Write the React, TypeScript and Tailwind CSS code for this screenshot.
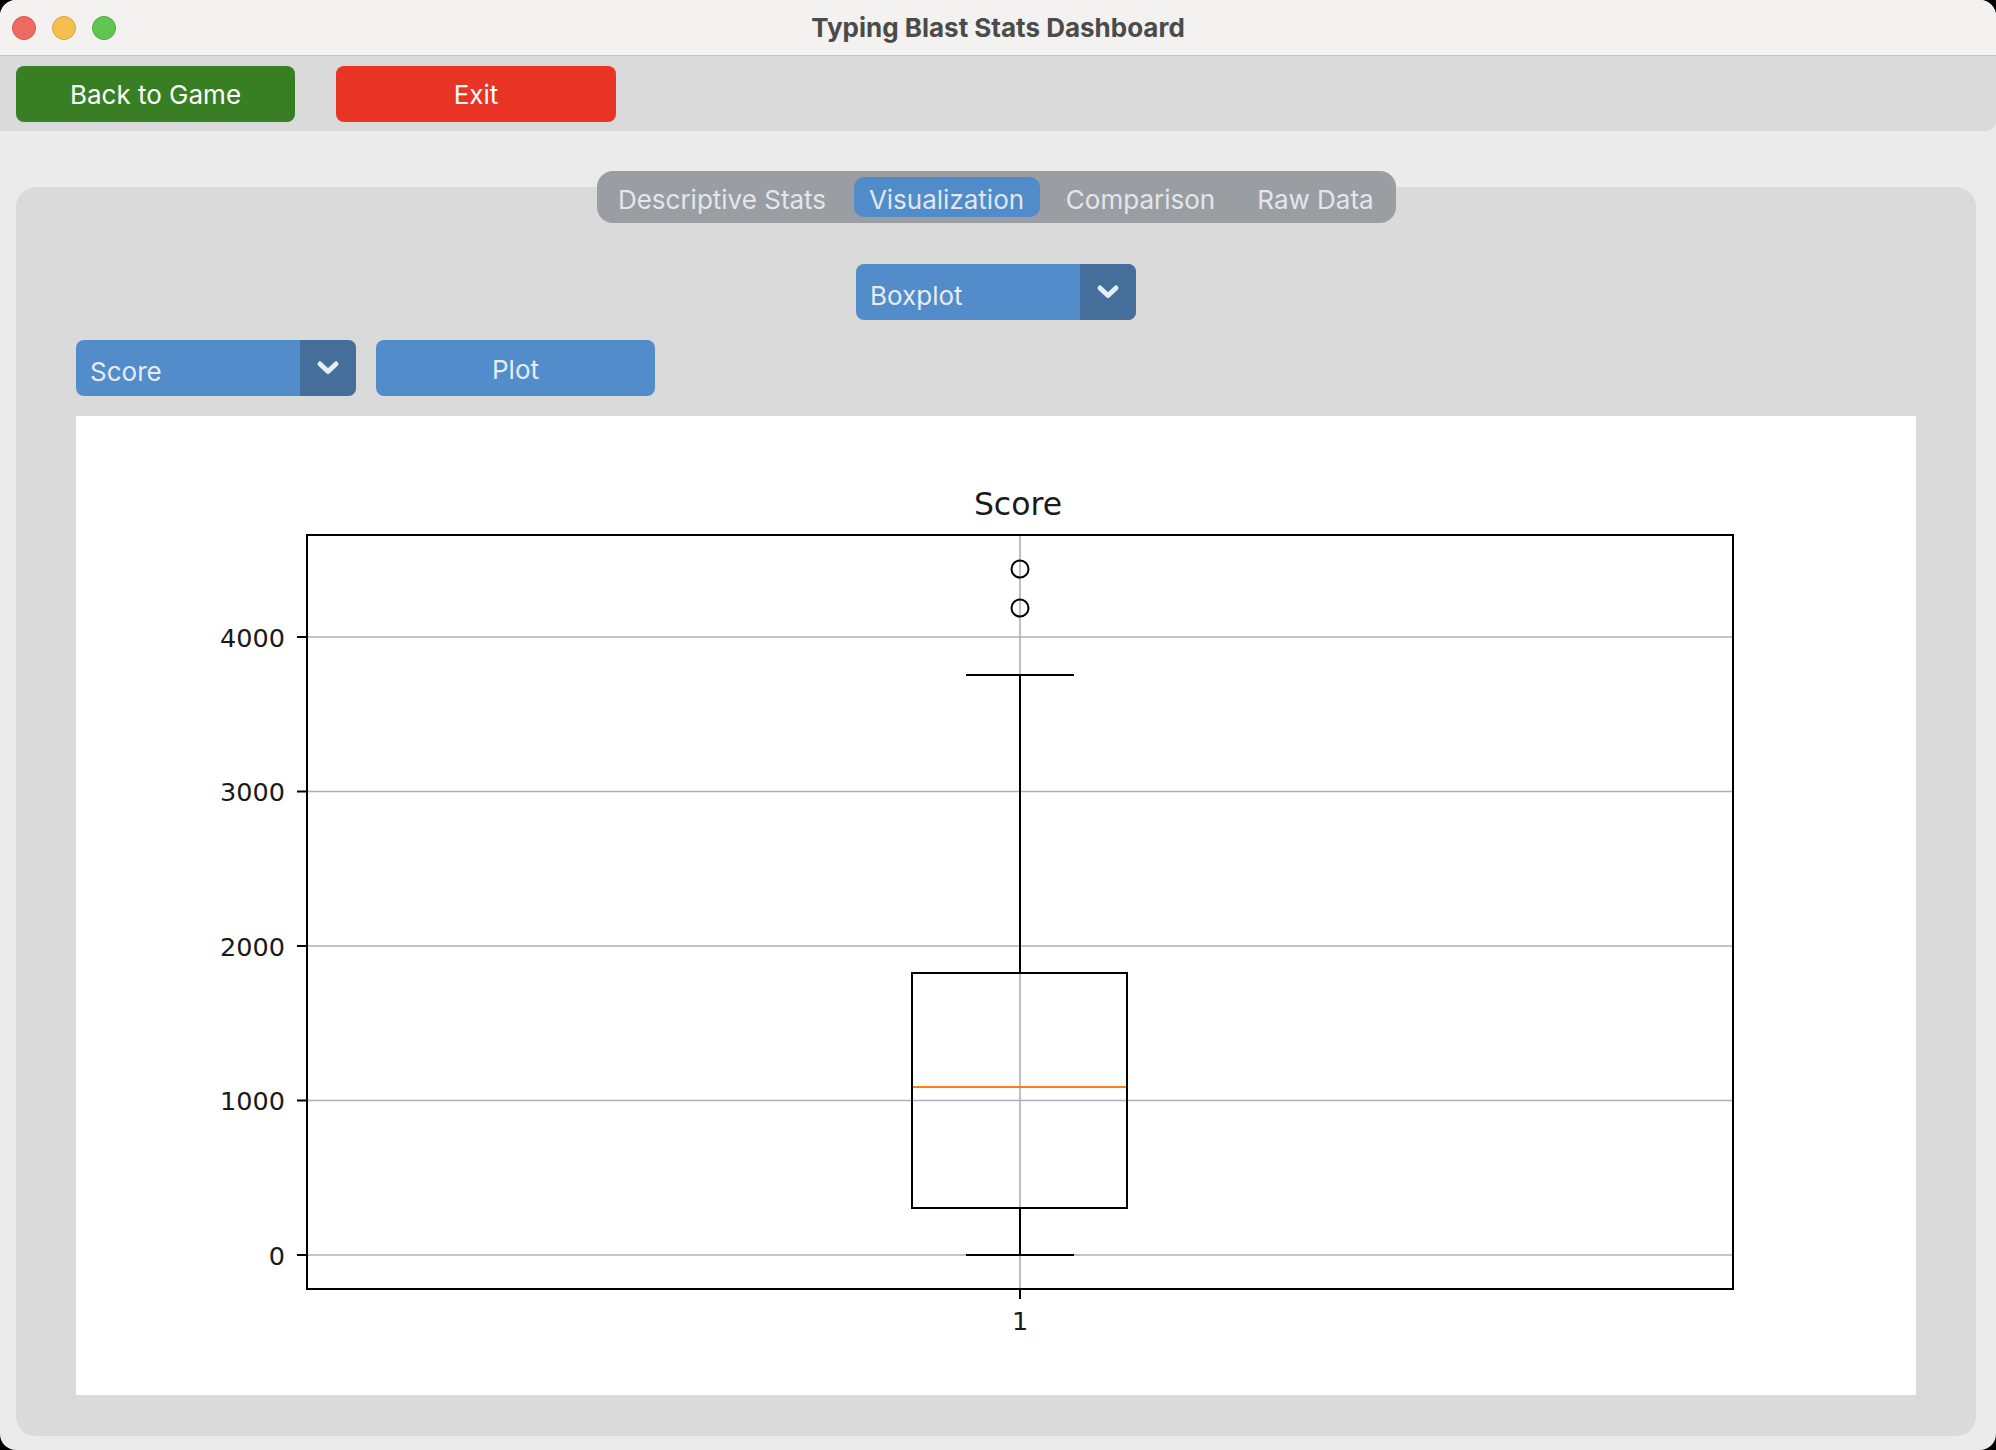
const yTicks = [
  { label: '4000', y: 221 },
  { label: '3000', y: 375.5 },
  { label: '2000', y: 530 },
  { label: '1000', y: 684.5 },
  { label: '0', y: 839 },
];

const tabs = [
  { label: 'Descriptive Stats', w: 'w-[239px]', active: false },
  { label: 'Visualization', w: 'w-[186px]', active: true },
  { label: 'Comparison', w: 'w-[178px]', active: false },
  { label: 'Raw Data', w: 'w-[148px]', active: false },
];

function Chevron() {
  return (
    <svg width="24" height="16" viewBox="0 0 24 16">
      <polyline points="4,4 12,11.5 20,4" fill="none" stroke="#e8ecf4" strokeWidth="5" strokeLinecap="round" strokeLinejoin="round" />
    </svg>
  );
}

function Dropdown({ label, className }: { label: string; className?: string }) {
  return (
    <div className={`flex h-[56px] w-[280px] overflow-hidden rounded-[8px] bg-[#528ccb] ${className ?? ''}`}>
      <div className="flex flex-1 items-center pl-[14px] pt-[6px] text-[26px] text-[#e7ebf3]">{label}</div>
      <div className="flex w-[56px] items-center justify-center bg-[#456f9a]">
        <Chevron />
      </div>
    </div>
  );
}

function BoxPlot() {
  return (
    <svg viewBox="0 0 1840 979" className="h-full w-full" style={{ fontFamily: '"DejaVu Sans", sans-serif' }}>
      {/* grid */}
      {yTicks.map(t => (
        <line key={t.label} x1="231" x2="1657" y1={t.y} y2={t.y} stroke="#b0b0b0" strokeWidth="1.6" />
      ))}
      <line x1="944" x2="944" y1="119" y2="873" stroke="#b0b0b0" strokeWidth="1.6" />

      {/* whiskers */}
      <line x1="944" x2="944" y1="259" y2="557" stroke="#000" strokeWidth="2" />
      <line x1="944" x2="944" y1="792" y2="839" stroke="#000" strokeWidth="2" />
      <line x1="890" x2="998" y1="259" y2="259" stroke="#000" strokeWidth="2" />
      <line x1="890" x2="998" y1="839" y2="839" stroke="#000" strokeWidth="2" />

      {/* box */}
      <rect x="836" y="557" width="215" height="235" fill="none" stroke="#000" strokeWidth="2" />
      <line x1="837" x2="1050" y1="671" y2="671" stroke="#ff7f0e" strokeWidth="2" />

      {/* fliers */}
      <circle cx="944" cy="153" r="8.5" fill="none" stroke="#000" strokeWidth="2" />
      <circle cx="944" cy="192" r="8.5" fill="none" stroke="#000" strokeWidth="2" />

      {/* axes frame */}
      <rect x="231" y="119" width="1426" height="754" fill="none" stroke="#000" strokeWidth="2" />

      {/* y ticks */}
      {yTicks.map(t => (
        <g key={t.label}>
          <line x1="221" x2="231" y1={t.y} y2={t.y} stroke="#000" strokeWidth="2" />
          <text x="209" y={t.y + 9.5} textAnchor="end" fontSize="25.5" fill="#1a1a1a">
            {t.label}
          </text>
        </g>
      ))}

      {/* x tick */}
      <line x1="944" x2="944" y1="873" y2="883" stroke="#000" strokeWidth="2" />
      <text x="944" y="914" textAnchor="middle" fontSize="25.5" fill="#1a1a1a">1</text>

      <text x="942" y="99" textAnchor="middle" fontSize="31.5" fill="#1a1a1a">Score</text>
    </svg>
  );
}

export default function App() {
  return (
    <div className="h-[1450px] w-[1996px] bg-black" style={{ fontFamily: 'Inter, "Liberation Sans", sans-serif' }}>
      <div className="flex h-full w-full flex-col overflow-hidden rounded-[16px] bg-[#ebebeb]">
        {/* title bar */}
        <div className="grid h-[56px] grid-cols-[1fr_auto_1fr] items-center border-b border-[#c4c4c4] bg-[#f3f2f0] px-[12px]">
          <div className="flex items-center gap-[16px]">
            <span className="h-[24px] w-[24px] rounded-full border border-[#d9534a] bg-[#ee6a5e]" />
            <span className="h-[24px] w-[24px] rounded-full border border-[#d9a33c] bg-[#f5bf4f]" />
            <span className="h-[24px] w-[24px] rounded-full border border-[#4fa83f] bg-[#61c554]" />
          </div>
          <div className="text-[26px] font-bold text-[#4b4b4b]">Typing Blast Stats Dashboard</div>
          <div />
        </div>

        {/* toolbar */}
        <div className="flex h-[75px] items-center gap-[41px] rounded-br-[10px] bg-[#dadada] px-[16px]">
          <button className="h-[56px] w-[279px] rounded-[8px] bg-[#387f23] pt-[2px] text-[26px] text-white">Back to Game</button>
          <button className="h-[56px] w-[280px] rounded-[8px] bg-[#e93325] pt-[2px] text-[26px] text-white">Exit</button>
        </div>

        {/* main */}
        <div className="flex-1 pl-[16px] pr-[20px] pt-[56px]">
          <div className="flex flex-col items-center rounded-[20px] bg-[#dadada] px-[60px] pb-[41px]">
            <div className="-mt-[16px] flex h-[52px] items-center gap-[12px] rounded-[16px] bg-[#9a9ea2] px-[6px]">
              {tabs.map(t => (
                <div
                  key={t.label}
                  className={`flex h-[40px] items-center justify-center rounded-[10px] pt-[5px] text-[26px] text-[#e3e6ee] ${t.w} ${t.active ? 'bg-[#518cca]' : ''}`}
                >
                  {t.label}
                </div>
              ))}
            </div>

            <Dropdown label="Boxplot" className="mt-[41px] w-[279px]" />

            <div className="mt-[20px] flex w-full gap-[20px]">
              <Dropdown label="Score" />
              <button className="h-[56px] w-[279px] rounded-[8px] bg-[#528ccb] pt-[3px] text-[26px] text-[#e7ebf3]">Plot</button>
            </div>

            <div className="mt-[20px] h-[979px] w-full bg-white">
              <BoxPlot />
            </div>
          </div>
        </div>
      </div>
    </div>
  );
}
